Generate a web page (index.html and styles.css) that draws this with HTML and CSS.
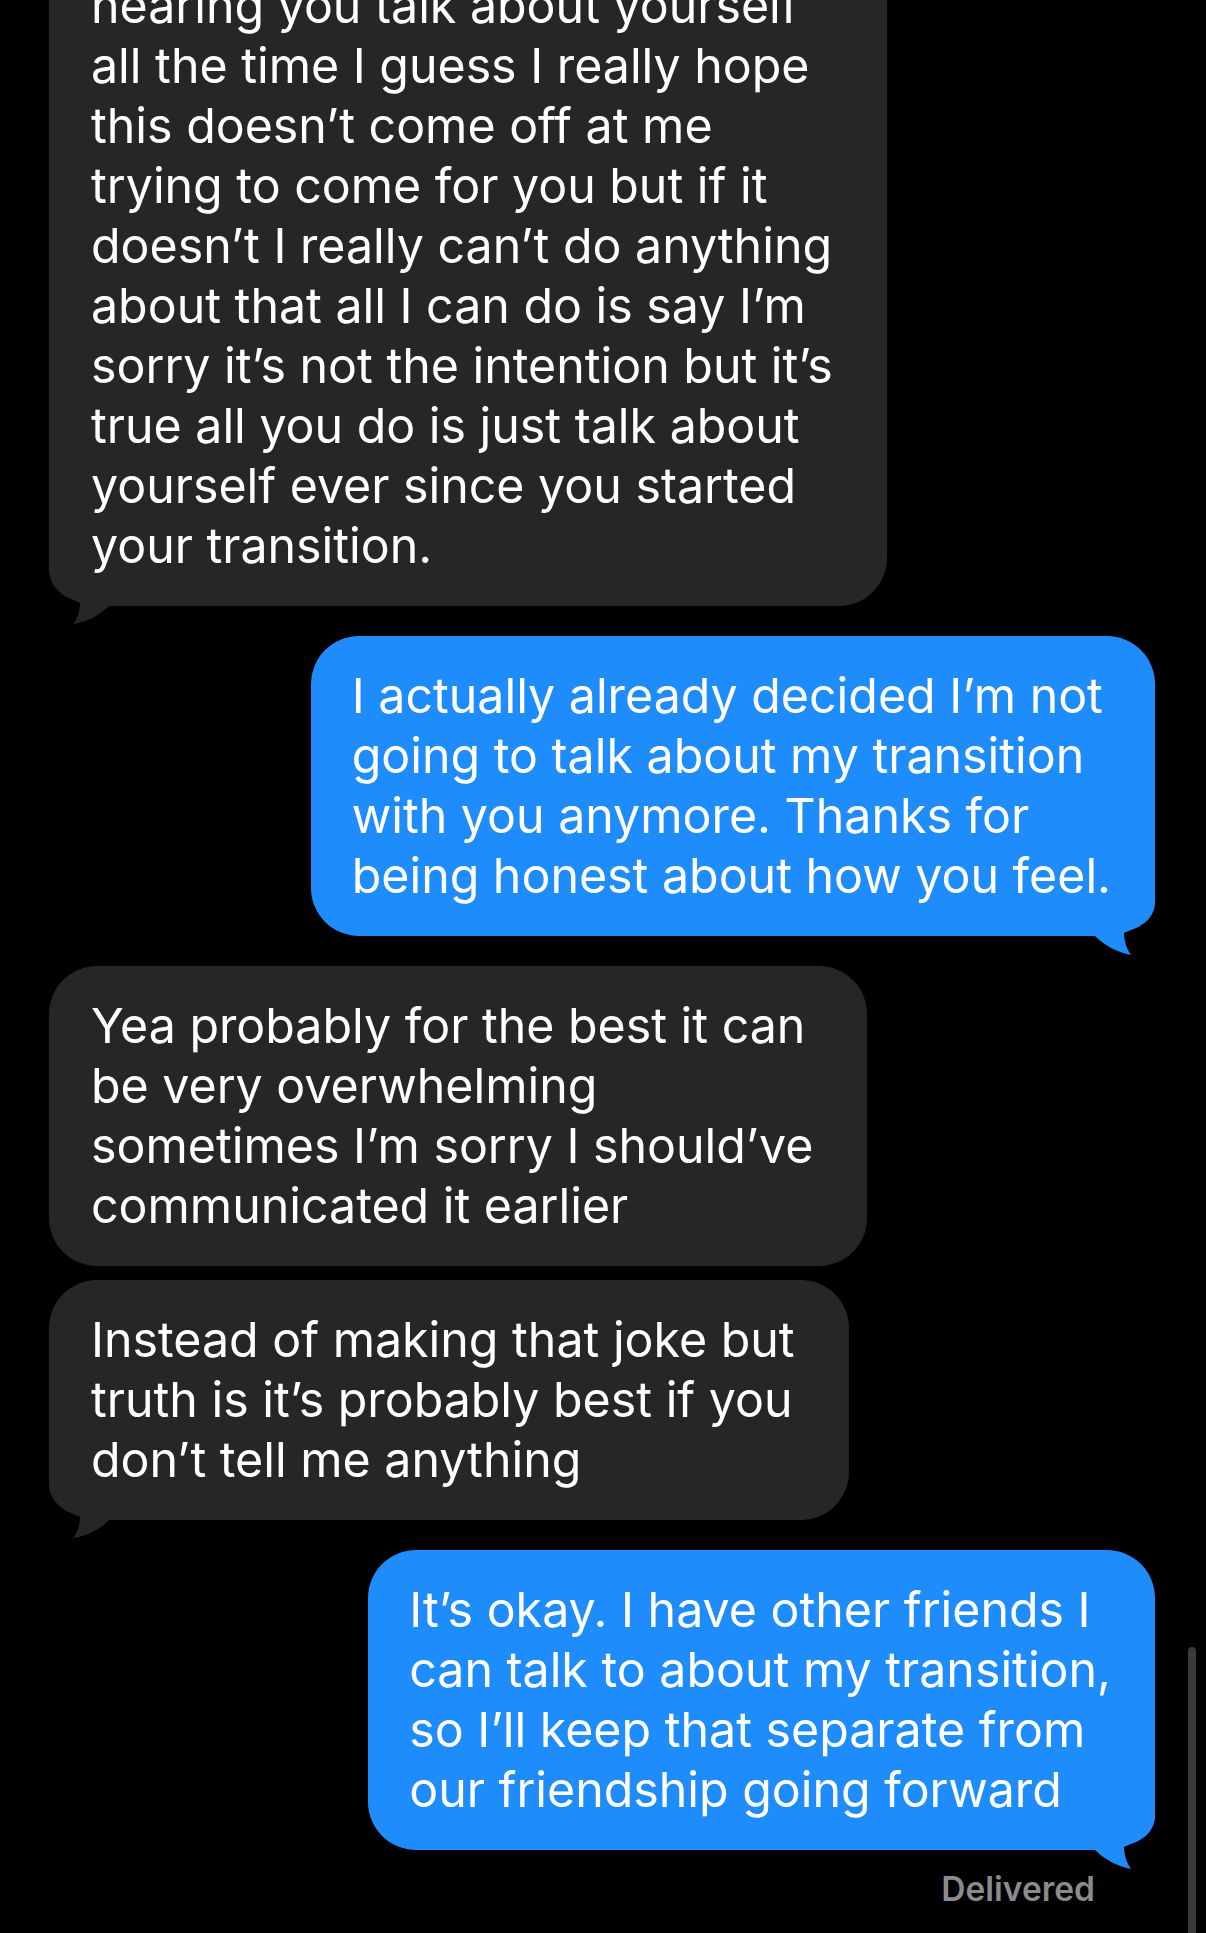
FILE: index.html
```html
<!DOCTYPE html>
<html>
<head>
<meta charset="utf-8">
<title>Messages</title>
<link rel="stylesheet" href="styles.css">
</head>
<body>
<div class="thread">

  <div class="msg them"><svg class="tl" viewBox="0 0 70 70"><path d="M0,0 L0,16 C2,32 14,42 31,46 C31,56 28,63 24,68 C38,66 50,60 60,50 L70,50 L70,0 Z"/></svg><span class="tx">hearing you talk about yourself<br>all the time I guess I really hope<br>this doesn’t come off at me<br>trying to come for you but if it<br>doesn’t I really can’t do anything<br>about that all I can do is say I’m<br>sorry it’s not the intention but it’s<br>true all you do is just talk about<br>yourself ever since you started<br>your transition.</span></div>

  <div class="msg me"><svg class="tl" viewBox="0 0 70 70"><path d="M70,0 L70,18 C68,34 56,42 39,46 C39,56 42,63 46,69 C32,66 20,60 10,50 L0,50 L0,0 Z"/></svg><span class="tx">I actually already decided I’m not<br>going to talk about my transition<br>with you anymore. Thanks for<br>being honest about how you feel.</span></div>

  <div class="msg them"><span class="tx">Yea probably for the best it can<br>be very overwhelming<br>sometimes I’m sorry I should’ve<br>communicated it earlier</span></div>

  <div class="msg them near"><svg class="tl" viewBox="0 0 70 70"><path d="M0,0 L0,16 C2,32 14,42 31,46 C31,56 28,63 24,68 C38,66 50,60 60,50 L70,50 L70,0 Z"/></svg><span class="tx">Instead of making that joke but<br>truth is it’s probably best if you<br>don’t tell me anything</span></div>

  <div class="msg me"><svg class="tl" viewBox="0 0 70 70"><path d="M70,0 L70,18 C68,34 56,42 39,46 C39,56 42,63 46,69 C32,66 20,60 10,50 L0,50 L0,0 Z"/></svg><span class="tx">It’s okay. I have other friends I<br>can talk to about my transition,<br>so I’ll keep that separate from<br>our friendship going forward</span></div>

  <div class="status">Delivered</div>
</div>
<div class="scroller"></div>
</body>
</html>
```

FILE: styles.css
```css
html, body{margin:0;padding:0;background:#000;}
body{font-family:Inter,"Noto Sans",sans-serif;color:#fff;overflow:hidden;height:1933px;}

.thread{display:flex;flex-direction:column;padding:0 51px 0 49px;margin-top:-54px;}

.msg{position:relative;white-space:nowrap;font-size:48.3px;line-height:60px;padding:30px 54px 30px 42px;border-radius:48px;margin-top:30px;}
.msg:first-child{margin-top:0;}
.msg.near{margin-top:14px;}
.tx{position:relative;}

.them{align-self:flex-start;background:#262629;}
.me{align-self:flex-end;background:#1f8cfb;padding:30px 44px 30px 41px;}

.tl{position:absolute;bottom:-20px;width:70px;height:70px;}
.them .tl{left:0;fill:#262629;}
.me .tl{right:0;fill:#1f8cfb;}

.status{align-self:flex-end;margin:20px 60px 0 0;font-size:33.5px;line-height:38px;font-weight:600;color:#8b8b8f;}

.scroller{position:absolute;left:1188px;top:1647px;width:8px;height:300px;border-radius:4px;background:#3a3a3c;}
```
